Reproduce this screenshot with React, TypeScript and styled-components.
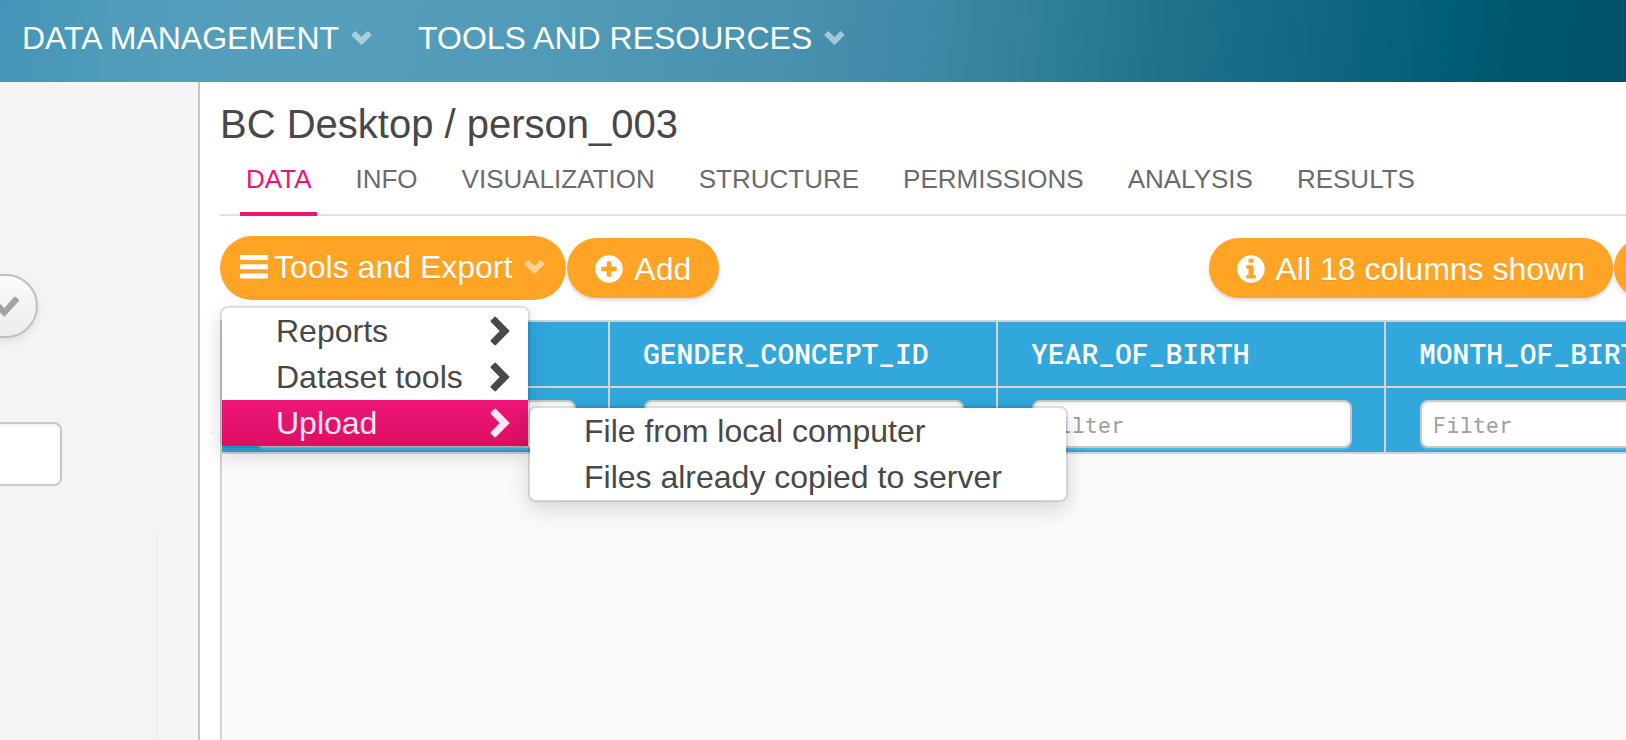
import React from "react";
import styled, { createGlobalStyle, css } from "styled-components";

const sans = `"Liberation Sans", Arial, sans-serif`;
const mono = `"Roboto Mono", "DejaVu Sans Mono", monospace`;
const orange = "#ffa424";
const grey = "#484848";

const GlobalStyle = createGlobalStyle`
  *, *::before, *::after { box-sizing: border-box; }
  body { margin: 0; background: #fff; color: ${grey}; font-family: ${sans}; }
  button, input { font: inherit; color: inherit; }
  ul { list-style: none; margin: 0; padding: 0; }
`;

const Page = styled.div`
  display: flex;
  flex-direction: column;
  min-height: 100vh;
  overflow: hidden;
`;

const TopBar = styled.nav`
  display: flex;
  align-items: center;
  gap: 46px;
  height: 82px;
  padding: 0 22px 6px;
  background: linear-gradient(
    97deg,
    #4495b7 0%,
    #519dbb 9%,
    #569fbc 20%,
    #519ab8 33%,
    #4891af 48%,
    #3f8aa8 56%,
    #35829d 62%,
    #297a93 67%,
    #1f708b 72%,
    #166a85 78%,
    #005d77 89%,
    #00566b 94%,
    #005169 100%
  );
`;

const NavButton = styled.button`
  display: flex;
  align-items: center;
  gap: 12px;
  padding: 0;
  border: 0;
  background: none;
  color: #fff;
  font-size: 32px;
  line-height: 40px;
  white-space: nowrap;
  cursor: pointer;
`;

const Body = styled.div`
  display: flex;
  flex: 1;
`;

const Sidebar = styled.aside`
  display: flex;
  flex-direction: column;
  flex: 0 0 200px;
  padding-top: 192px;
  border-right: 2px solid #c6c6c6;
  background: #f4f4f4;
  overflow: hidden;
`;

const RoundButton = styled.button`
  display: flex;
  align-items: center;
  justify-content: flex-end;
  width: 72px;
  height: 64px;
  margin-left: -34px;
  padding: 0 16px;
  border: 2px solid #c0c0c0;
  border-radius: 32px;
  background: linear-gradient(#fbfbfb, #ececec);
  box-shadow: 0 4px 8px rgba(0, 0, 0, 0.08);
  color: #a3a3a3;
`;

const SideInput = styled.input`
  width: 162px;
  height: 64px;
  margin: 84px 0 40px -100px;
  border: 2px solid #c8c8c8;
  border-radius: 8px;
  background: #fff;
  box-shadow: inset 0 2px 3px rgba(0, 0, 0, 0.06);
`;

const SidePanel = styled.div`
  flex: 1;
  width: 156px;
  box-shadow: 2px 4px 4px rgba(0, 0, 0, 0.03);
`;

const Main = styled.main`
  display: flex;
  flex: 1;
  flex-direction: column;
  min-width: 0;
  padding: 18px 0 0 20px;
`;

const Title = styled.h1`
  margin: 0;
  font-size: 40px;
  font-weight: 400;
  line-height: 48px;
`;

const Tabs = styled.div`
  display: flex;
  gap: 32px;
  height: 68px;
  padding-left: 20px;
  border-bottom: 2px solid #e2e2e2;
`;

const Tab = styled.button<{ $active?: boolean }>`
  height: 68px;
  padding: 16px 6px 18px;
  border: 0;
  border-bottom: 4px solid ${(p) => (p.$active ? "#ec1575" : "transparent")};
  background: none;
  color: ${(p) => (p.$active ? "#ec1575" : "#6b6b6b")};
  font-size: 26px;
  line-height: 30px;
  cursor: pointer;
`;

const Toolbar = styled.div`
  display: flex;
  align-items: center;
  justify-content: space-between;
  height: 104px;
  padding: 20px 0;
`;

const Group = styled.div`
  display: flex;
  align-items: center;
  gap: 1px;
  height: 64px;
`;

const Trailing = styled(Group)`
  margin-right: -72px;
`;

const MenuAnchor = styled.div`
  position: relative;
`;

const pill = css`
  display: flex;
  align-items: center;
  border: 0;
  background: ${orange};
  color: #fff;
  font-size: 32px;
  line-height: 40px;
  white-space: nowrap;
  text-shadow: 0 1px 1px rgba(0, 0, 0, 0.08);
  cursor: pointer;
`;

const MenuButton = styled.button`
  ${pill}
  gap: 6px;
  height: 64px;
  padding: 0 21px 2px 20px;
  border-radius: 32px;

  svg:last-child { margin-left: 6px; }
`;

const PillButton = styled.button`
  ${pill}
  gap: 11px;
  height: 60px;
  padding: 1px 28px 0;
  border-radius: 30px;
  box-shadow: 0 2px 3px rgba(0, 0, 0, 0.12), 0 4px 10px rgba(0, 0, 0, 0.05);
`;

const menuBox = css`
  position: absolute;
  border: 2px solid rgba(0, 0, 0, 0.12);
  border-radius: 8px;
  background: #fff;
  background-clip: padding-box;
  box-shadow: 0 8px 20px rgba(0, 0, 0, 0.14);
`;

const Menu = styled.ul`
  ${menuBox}
  top: 70px;
  left: 0;
  z-index: 2;
  width: 310px;
`;

const Submenu = styled.ul`
  ${menuBox}
  top: 6px;
  left: 306px;
  width: 540px;
`;

const MenuItem = styled.li`
  position: relative;
`;

const MenuAction = styled.button<{ $active?: boolean }>`
  display: flex;
  align-items: center;
  justify-content: space-between;
  width: 100%;
  height: 46px;
  padding: 0 18px 0 54px;
  border: 0;
  background: ${(p) => (p.$active ? "linear-gradient(#ee1679, #dd0f60)" : "none")};
  color: ${(p) => (p.$active ? "#fce8f1" : grey)};
  font-size: 32px;
  line-height: 46px;
  text-align: left;
  white-space: nowrap;
  cursor: pointer;
`;

const GridFrame = styled.div`
  flex: 1;
  border: solid #d3d3d3;
  border-width: 2px 0 0 2px;
  background: #fafafa;
  overflow: hidden;
`;

const Grid = styled.table`
  width: 1940px;
  border-collapse: separate;
  border-spacing: 0;
  table-layout: fixed;
  background: #31a7dc;
  font-family: ${mono};
`;

const HeadCell = styled.th`
  height: 66px;
  padding: 0 32px 0 33px;
  border: solid #d3d3d3;
  border-width: 0 2px 2px 0;
  color: #fff;
  font-size: 28px;
  font-weight: 500;
  line-height: 32px;
  text-align: left;
`;

const FilterCell = styled.td`
  height: 66px;
  padding: 8px 32px 0 34px;
  border: solid #d3d3d3;
  border-width: 0 2px 2px 0;
`;

const FilterInput = styled.input`
  display: block;
  width: 100%;
  height: 48px;
  padding: 0 11px;
  border: 2px solid #c8c8c8;
  border-radius: 8px;
  background: #fff;
  box-shadow: inset 0 2px 3px rgba(0, 0, 0, 0.06), 0 2px 0 rgba(255, 255, 255, 0.15);
  font-size: 22px;
  &::placeholder { color: #a0a0a0; opacity: 1; }
`;

const ChevronDown = () => (
  <svg width="21" height="14" viewBox="0 0 21 14" fill="currentColor" opacity="0.5" aria-hidden="true">
    <path d="M9.900 13.500.8 4.800q-.6-.6 0-1.200L3.700.6q.6-.6 1.200 0l5.600 5.400L16.100.6q.6-.6 1.200 0l2.900 3q.6.6 0 1.200L11.100 13.500q-.6.6-1.200 0z" />
  </svg>
);

const ChevronRight = () => (
  <svg width="20" height="30" viewBox="0 0 20 30" fill="currentColor" aria-hidden="true">
    <path d="M19.300 15.600 6 29q-.8.8-1.600 0L.9 25.700q-.8-.8 0-1.600L9.700 15 .9 5.900q-.8-.8 0-1.600L4.400 1q.8-.8 1.600 0l13.300 13.400q.6.6 0 1.200z" />
  </svg>
);

const Bars = () => (
  <svg width="28" height="24" viewBox="0 0 28 24" fill="currentColor" aria-hidden="true">
    <rect y="0" width="28" height="5" rx="1" />
    <rect y="9.300" width="28" height="5" rx="1" />
    <rect y="18.600" width="28" height="5" rx="1" />
  </svg>
);

const PlusCircle = () => (
  <svg width="28" height="28" viewBox="0 0 28 28" aria-hidden="true">
    <circle cx="14" cy="14" r="13.700" fill="#fff" />
    <path d="M12.700 6.200h2.600q1 0 1 1v4.500h4.500q1 0 1 1v2.600q0 1-1 1h-4.500v4.500q0 1-1 1h-2.600q-1 0-1-1v-4.500H7.200q-1 0-1-1v-2.600q0-1 1-1h4.500V7.200q0-1 1-1z" fill={orange} />
  </svg>
);

const InfoCircle = () => (
  <svg width="28" height="28" viewBox="0 0 28 28" aria-hidden="true">
    <circle cx="14" cy="14" r="13.700" fill="#fff" />
    <path d="M11.500 3.800h5v4h-5zM9.300 10.200h7.200v9.800h2.200v3.600H9.300V20h2.200v-6.200H9.300z" fill={orange} />
  </svg>
);

const Check = () => (
  <svg width="27" height="21" viewBox="0 0 27 21" fill="currentColor" aria-hidden="true">
    <path d="M10.800 20.200.8 10.200q-.6-.6 0-1.200l3-3q.6-.6 1.200 0l6.400 5.900L21.200.8q.6-.6 1.200 0l3.500 3q.6.6 0 1.200L12 20.200q-.6.6-1.200 0z" />
  </svg>
);

const tabs = ["DATA", "INFO", "VISUALIZATION", "STRUCTURE", "PERMISSIONS", "ANALYSIS", "RESULTS"];
const columns = ["", "GENDER_CONCEPT_ID", "YEAR_OF_BIRTH", "MONTH_OF_BIRTH", ""];

export default function App() {
  return (
    <Page>
      <GlobalStyle />
      <TopBar>
        <NavButton>DATA MANAGEMENT <ChevronDown /></NavButton>
        <NavButton>TOOLS AND RESOURCES <ChevronDown /></NavButton>
      </TopBar>
      <Body>
        <Sidebar>
          <RoundButton aria-label="Apply"><Check /></RoundButton>
          <SideInput aria-label="Search" />
          <SidePanel />
        </Sidebar>
        <Main>
          <Title>BC Desktop / person_003</Title>
          <Tabs role="tablist">
            {tabs.map((t, i) => (
              <Tab key={t} role="tab" aria-selected={i === 0} $active={i === 0}>{t}</Tab>
            ))}
          </Tabs>
          <Toolbar>
            <Group>
              <MenuAnchor>
                <MenuButton aria-haspopup="menu" aria-expanded="true">
                  <Bars />
                  <span>Tools and Export</span>
                  <ChevronDown />
                </MenuButton>
                <Menu>
                  <MenuItem><MenuAction>Reports <ChevronRight /></MenuAction></MenuItem>
                  <MenuItem><MenuAction>Dataset tools <ChevronRight /></MenuAction></MenuItem>
                  <MenuItem>
                    <MenuAction $active>Upload <ChevronRight /></MenuAction>
                    <Submenu>
                      <MenuItem><MenuAction>File from local computer</MenuAction></MenuItem>
                      <MenuItem><MenuAction>Files already copied to server</MenuAction></MenuItem>
                    </Submenu>
                  </MenuItem>
                </Menu>
              </MenuAnchor>
              <PillButton><PlusCircle /> Add</PillButton>
            </Group>
            <Trailing>
              <PillButton><InfoCircle /> All 18 columns shown</PillButton>
              <PillButton aria-label="More"><PlusCircle /></PillButton>
            </Trailing>
          </Toolbar>
          <GridFrame>
            <Grid>
              <thead>
                <tr>{columns.map((c, i) => <HeadCell key={i} scope="col">{c}</HeadCell>)}</tr>
              </thead>
              <tbody>
                <tr>
                  {columns.map((c, i) => (
                    <FilterCell key={i}>
                      <FilterInput placeholder={c && "Filter"} aria-label={`Filter column ${i + 1}`} />
                    </FilterCell>
                  ))}
                </tr>
              </tbody>
            </Grid>
          </GridFrame>
        </Main>
      </Body>
    </Page>
  );
}
